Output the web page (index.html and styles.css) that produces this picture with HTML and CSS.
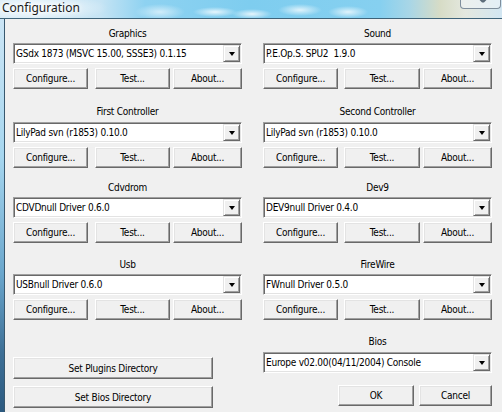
FILE: index.html
```html
<!DOCTYPE html>
<html>
<head>
<meta charset="utf-8">
<title>Configuration</title>
<link rel="stylesheet" href="styles.css">
</head>
<body>
<div class="window">
  <div class="titlebar">
    <span class="title">Configuration</span>
    <div class="close-btn">
      <svg width="40" height="9" viewBox="0 0 40 9"><path d="M15 -5 L22 2 M29 -5 L22 2" stroke="#5a6a78" stroke-width="2" fill="none"/></svg>
    </div>
  </div>
  <div class="frame">
    <div class="frame-left"></div>
    <div class="client">
      <div class="grid">
        <div class="group">
          <div class="label">Graphics</div>
          <div class="combo"><span class="combo-text">GSdx 1873 (MSVC 15.00, SSSE3) 0.1.15</span><span class="drop"><span class="arrow"></span></span></div>
          <div class="buttons"><button class="btn b-conf">Configure...</button><button class="btn b-test">Test...</button><button class="btn b-about">About...</button></div>
        </div>
        <div class="group">
          <div class="label">Sound</div>
          <div class="combo"><span class="combo-text">P.E.Op.S. SPU2&nbsp; 1.9.0</span><span class="drop"><span class="arrow"></span></span></div>
          <div class="buttons right"><button class="btn b-conf">Configure...</button><button class="btn b-test">Test...</button><button class="btn b-about">About...</button></div>
        </div>
        <div class="group second">
          <div class="label">First Controller</div>
          <div class="combo"><span class="combo-text">LilyPad svn (r1853) 0.10.0</span><span class="drop"><span class="arrow"></span></span></div>
          <div class="buttons"><button class="btn b-conf">Configure...</button><button class="btn b-test">Test...</button><button class="btn b-about">About...</button></div>
        </div>
        <div class="group second">
          <div class="label">Second Controller</div>
          <div class="combo"><span class="combo-text">LilyPad svn (r1853) 0.10.0</span><span class="drop"><span class="arrow"></span></span></div>
          <div class="buttons right"><button class="btn b-conf">Configure...</button><button class="btn b-test">Test...</button><button class="btn b-about">About...</button></div>
        </div>
        <div class="group">
          <div class="label">Cdvdrom</div>
          <div class="combo"><span class="combo-text">CDVDnull Driver 0.6.0</span><span class="drop"><span class="arrow"></span></span></div>
          <div class="buttons"><button class="btn b-conf">Configure...</button><button class="btn b-test">Test...</button><button class="btn b-about">About...</button></div>
        </div>
        <div class="group">
          <div class="label">Dev9</div>
          <div class="combo"><span class="combo-text">DEV9null Driver 0.4.0</span><span class="drop"><span class="arrow"></span></span></div>
          <div class="buttons right"><button class="btn b-conf">Configure...</button><button class="btn b-test">Test...</button><button class="btn b-about">About...</button></div>
        </div>
        <div class="group">
          <div class="label">Usb</div>
          <div class="combo"><span class="combo-text">USBnull Driver 0.6.0</span><span class="drop"><span class="arrow"></span></span></div>
          <div class="buttons"><button class="btn b-conf">Configure...</button><button class="btn b-test">Test...</button><button class="btn b-about">About...</button></div>
        </div>
        <div class="group">
          <div class="label">FireWire</div>
          <div class="combo"><span class="combo-text">FWnull Driver 0.5.0</span><span class="drop"><span class="arrow"></span></span></div>
          <div class="buttons right"><button class="btn b-conf">Configure...</button><button class="btn b-test">Test...</button><button class="btn b-about">About...</button></div>
        </div>
        <div class="bottom-left">
          <button class="btn wide">Set Plugins Directory</button>
          <button class="btn wide">Set Bios Directory</button>
        </div>
        <div class="bottom-right">
          <div class="label">Bios</div>
          <div class="combo"><span class="combo-text">Europe v02.00(04/11/2004) Console</span><span class="drop"><span class="arrow"></span></span></div>
          <div class="ok-row"><button class="btn b-ok">OK</button><button class="btn b-cancel">Cancel</button></div>
        </div>
      </div>
    </div>
  </div>
</div>
</body>
</html>
```

FILE: styles.css
```css
html, body {
  margin: 0;
  padding: 0;
}
body {
  width: 502px;
  height: 412px;
  overflow: hidden;
  background: #f0f0f0;
  font-family: "DejaVu Sans Condensed", "DejaVu Sans", sans-serif;
  font-size: 10px;
  letter-spacing: -0.25px;
  color: #000;
}
.window {
  display: flex;
  flex-direction: column;
  height: 412px;
}
.titlebar {
  flex: none;
  height: 18px;
  display: flex;
  justify-content: space-between;
  align-items: flex-start;
  border-bottom: 1px solid #3e6379;
  background:
    radial-gradient(ellipse 22px 5px at 215px 12px, rgba(255,255,255,0.8), rgba(255,255,255,0) 100%),
    radial-gradient(ellipse 20px 5px at 252px 14px, rgba(255,255,255,0.8), rgba(255,255,255,0) 100%),
    radial-gradient(ellipse 22px 6px at 300px 10px, rgba(255,255,255,0.75), rgba(255,255,255,0) 100%),
    radial-gradient(ellipse 20px 6px at 348px 12px, rgba(255,255,255,0.75), rgba(255,255,255,0) 100%),
    radial-gradient(ellipse 25px 8px at 160px 12px, rgba(255,255,255,0.6), rgba(255,255,255,0) 100%),
    radial-gradient(ellipse 70px 14px at 38px 8px, rgba(255,255,255,0.9), rgba(255,255,255,0) 100%),
    linear-gradient(to right, #d6eaf6 0, #c6e4f4 100px, #8ed2f1 145px, #7ecdef 250px, #86d0f0 380px, #a9d6e6 410px, #d7dcc6 440px, #e4e8df 465px, #d2e6f2 502px);
}
.title {
  font-family: "Noto Sans", "Open Sans", sans-serif;
  font-size: 12px;
  letter-spacing: 0;
  line-height: 16px;
  padding-left: 2px;
  color: #1b1b1b;
  text-shadow: 0 0 5px #fff, 0 0 8px #fff;
}
.close-btn {
  width: 39px;
  height: 8px;
  margin-right: 1px;
  border: 1px solid #7e8e9c;
  border-top: none;
  border-radius: 0 0 4px 4px;
  background: rgba(240, 246, 250, 0.55);
  overflow: hidden;
}
.close-btn svg {
  display: block;
}
.frame {
  flex: 1;
  display: flex;
}
.frame-left {
  width: 4px;
  border-right: 1px solid #38586e;
  background: linear-gradient(#cbe5f5 0, #a6d6ef 35%, #6aa6cc 65%, #3d6f96 85%, #2c5a80 100%);
}
.client {
  flex: 1;
  padding: 8px 0 0 8px;
}
.grid {
  display: grid;
  grid-template-columns: 229px 229px;
  column-gap: 21px;
  row-gap: 15px;
}
.group {
  display: flex;
  flex-direction: column;
}
.label {
  height: 13px;
  line-height: 13px;
  text-align: center;
  margin-bottom: 3px;
  white-space: nowrap;
}
.second .label {
  margin-top: 1px;
}
.second .combo {
  margin-top: 1px;
}
.second .buttons {
  margin-bottom: -2px;
}
.combo {
  height: 21px;
  box-sizing: border-box;
  display: flex;
  align-items: center;
  background: #fff;
  border: 1px solid;
  border-color: #a0a0a0 #fff #fff #a0a0a0;
  box-shadow: inset 1px 1px 0 #696969, inset -1px -1px 0 #e3e3e3;
  padding: 1px 1px 1px 2px;
}
.combo-text {
  flex: 1;
  white-space: nowrap;
  overflow: hidden;
  line-height: 17px;
}
.drop {
  width: 17px;
  height: 17px;
  box-sizing: border-box;
  flex: none;
  display: flex;
  align-items: center;
  justify-content: center;
  background: #f0f0f0;
  border: 1px solid;
  border-color: #e3e3e3 #696969 #696969 #e3e3e3;
  box-shadow: inset 1px 1px 0 #fff, inset -1px -1px 0 #a0a0a0;
}
.arrow {
  width: 0;
  height: 0;
  border-left: 3.5px solid transparent;
  border-right: 3.5px solid transparent;
  border-top: 4px solid #000;
  margin-top: 1px;
}
.buttons {
  display: flex;
  margin-top: 4px;
}
.btn {
  height: 21px;
  box-sizing: border-box;
  padding: 0;
  margin: 0;
  font-family: "DejaVu Sans Condensed", "DejaVu Sans", sans-serif;
  font-size: 10px;
  letter-spacing: -0.25px;
  color: #000;
  background: #f0f0f0;
  border: 1px solid;
  border-color: #fff #696969 #696969 #fff;
  box-shadow: inset -1px -1px 0 #a0a0a0, inset 1px 1px 0 #e3e3e3;
  border-radius: 0;
  text-align: center;
  line-height: 17px;
}
.b-conf {
  width: 75px;
}
.b-test {
  width: 75px;
  margin-left: 7px;
}
.b-about {
  width: 69px;
  margin-left: 3px;
}
.right .b-test {
  width: 76px;
  margin-left: 6px;
}
.bottom-left {
  display: flex;
  flex-direction: column;
  padding-top: 22px;
  gap: 7px;
}
.wide {
  width: 200px;
  height: 22px;
}
.bottom-right {
  display: flex;
  flex-direction: column;
}
.bottom-right .label {
  margin-bottom: 4px;
}
.ok-row {
  display: flex;
  justify-content: flex-end;
  gap: 5px;
  margin-top: 12px;
}
.b-ok {
  width: 76px;
}
.b-cancel {
  width: 73px;
}
```
